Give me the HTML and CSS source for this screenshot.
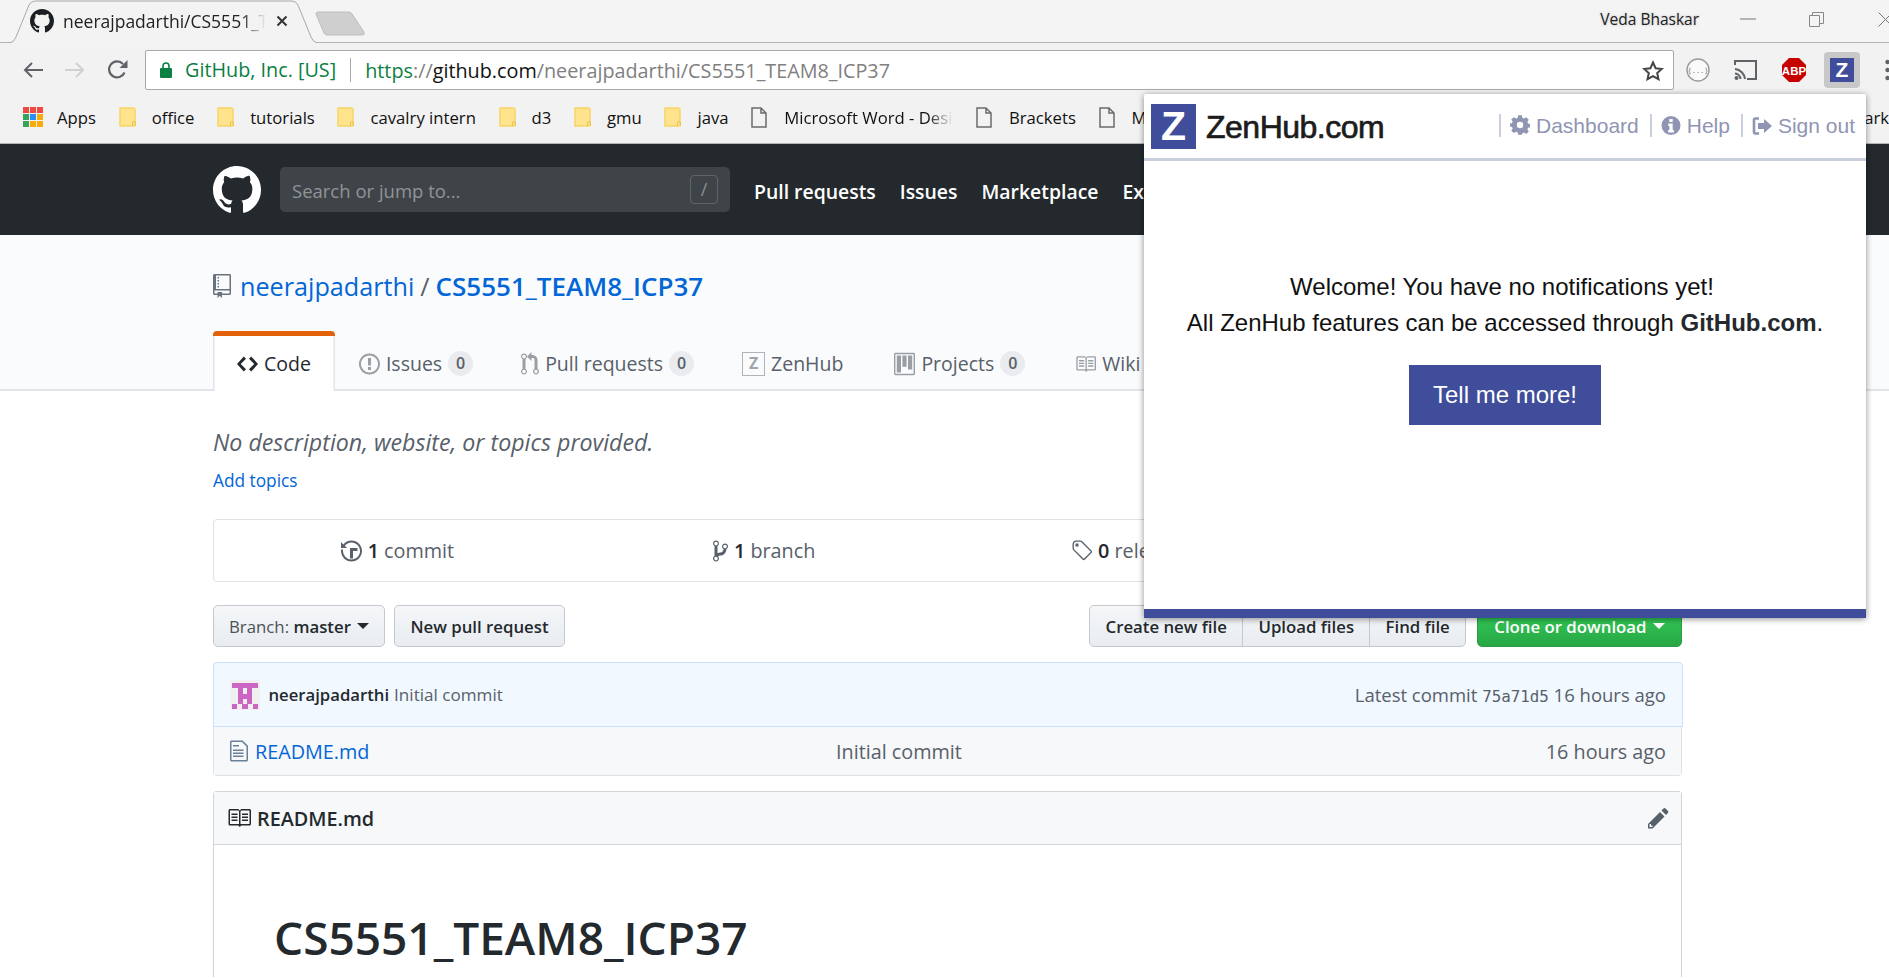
FILE: index.html
```html
<!DOCTYPE html>
<html lang="en">
<head>
    <meta charset="UTF-8">
    <title>neerajpadarthi/CS5551_TEAM8_ICP37</title>
    <link rel="stylesheet" href="styles.css">
</head>
<body>
    <div class="chrome">
        <div class="tabstrip">
            <div class="tab">
                <svg class="tab-shape" width="310" height="43" viewBox="0 0 310 43"><path d="M0 43 H2 Q6 42 8 37 L21 5 Q23 1 27 1 H284 Q288 1 290 5 L303 37 Q305 42 309 43" fill="#f3f3f3" stroke="#a9a9a9"/></svg>
                <svg class="favicon" width="24" height="24" viewBox="0 0 16 16"><path fill="#1b1f23" d="M8 0C3.58 0 0 3.58 0 8c0 3.54 2.29 6.53 5.47 7.59.4.07.55-.17.55-.38 0-.19-.01-.82-.01-1.49-2.01.37-2.53-.49-2.69-.94-.09-.23-.48-.94-.82-1.13-.28-.15-.68-.52-.01-.53.63-.01 1.08.58 1.23.82.72 1.21 1.87.87 2.33.66.07-.52.28-.87.51-1.07-1.78-.2-3.64-.89-3.64-3.95 0-.87.31-1.59.82-2.15-.08-.2-.36-1.02.08-2.12 0 0 .67-.21 2.2.82.64-.18 1.32-.27 2-.27.68 0 1.36.09 2 .27 1.53-1.04 2.2-.82 2.2-.82.44 1.1.16 1.92.08 2.12.51.56.82 1.27.82 2.15 0 3.07-1.87 3.75-3.65 3.95.29.25.54.73.54 1.48 0 1.07-.01 1.93-.01 2.2 0 .21.15.46.55.38A8.013 8.013 0 0016 8c0-4.42-3.58-8-8-8z"/></svg>
                <span class="tab-title">neerajpadarthi/CS5551_TEAM8_ICP37</span>
                <svg class="tab-close" width="12" height="12" viewBox="0 0 12 12"><path d="M1.5 1.5l9 9m0-9l-9 9" stroke="#333" stroke-width="2"/></svg>
            </div>
            <svg class="new-tab" width="51" height="25" viewBox="0 0 51 25"><path d="M1 3 Q1 1 3 1 H34 Q36 1 37 3 L49 21 Q50 24 47 24 H12 Q10 24 9 22 Z" fill="#cfcfcf" stroke="#bdbdbd"/></svg>
            <div class="window-controls">
                <span class="profile">Veda Bhaskar</span>
                <svg class="minimize" width="16" height="2" viewBox="0 0 16 2"><path d="M0 1h16" stroke="#777" stroke-width="1"/></svg>
                <svg class="restore" width="15" height="15" viewBox="0 0 15 15"><path d="M.5 3.5h10v11H.5zM3.5 3.5v-3h11v11h-4" fill="none" stroke="#888"/></svg>
                <svg class="close" width="15" height="15" viewBox="0 0 15 15"><path d="M.5 .5l14 14m0-14l-14 14" stroke="#777"/></svg>
            </div>
        </div>

        <div class="toolbar">
            <svg class="tool-back" width="20" height="16" viewBox="0 0 20 16"><path d="M9 1L2 8l7 7M2 8h18" fill="none" stroke="#5f6368" stroke-width="2"/></svg>
            <svg class="tool-forward" width="20" height="16" viewBox="0 0 20 16"><path d="M11 1l7 7-7 7M18 8H0" fill="none" stroke="#d0d0d0" stroke-width="2"/></svg>
            <svg class="tool-reload" width="21" height="21" viewBox="0 0 21 21"><path d="M17.5 13.5A8 8 0 1 1 16 5" fill="none" stroke="#5f6368" stroke-width="2.2"/><path d="M20.5 1v8h-8z" fill="#5f6368"/></svg>
            <div class="omnibox">
                <svg class="lock" width="12" height="16" viewBox="0 0 12 16"><path d="M3 6V4a3 3 0 0 1 6 0v2" fill="none" stroke="#0b8043" stroke-width="1.6"/><rect y="6" width="12" height="10" rx="1" fill="#0b8043"/></svg>
                <span class="ev-name">GitHub, Inc. [US]</span>
                <span class="url"><span class="url-scheme">https</span><span class="url-path">://</span><span class="url-host">github.com</span><span class="url-path">/neerajpadarthi/CS5551_TEAM8_ICP37</span></span>
                <svg class="star" width="22" height="21" viewBox="0 0 22 21"><path d="M11 2.5l2.6 5.7 6.2.7-4.6 4.2 1.3 6.1L11 16.1l-5.5 3.1 1.3-6.1-4.6-4.2 6.2-.7z" fill="none" stroke="#444" stroke-width="2"/></svg>
            </div>
            <div class="extensions">
                <svg class="ext" width="24" height="24" viewBox="0 0 24 24"><circle cx="12" cy="12" r="11" fill="#fafafa" stroke="#9b9b9b" stroke-width="1.4"/><text x="12" y="15" text-anchor="middle" class="ext-json">{...}</text></svg>
                <svg class="ext" width="24" height="24" viewBox="0 0 24 24"><path d="M1 7V3h21v18h-9" fill="none" stroke="#5f6368" stroke-width="2"/><path d="M1 11a11 11 0 0 1 10 10M1 15.500a6 6 0 0 1 5.500 5.500" fill="none" stroke="#5f6368" stroke-width="2"/><circle cx="2.500" cy="20" r="2" fill="#5f6368"/></svg>
                <svg class="ext ext-red" width="24" height="24" viewBox="0 0 24 24"><path d="M7 0h10l7 7v10l-7 7H7l-7-7V7z" fill="#c70000"/><text x="12" y="16.500" text-anchor="middle" class="ext-abp">ABP</text></svg>
                <div class="ext-active"><span class="ext-z">Z</span></div>
                <svg class="menu-dots" width="5" height="24" viewBox="0 0 5 24"><circle cx="2.500" cy="4" r="2.200" fill="#5f6368"/><circle cx="2.500" cy="12" r="2.200" fill="#5f6368"/><circle cx="2.500" cy="20" r="2.200" fill="#5f6368"/></svg>
            </div>
        </div>

        <div class="bookmarks">
            <div class="bm bm-apps">
                <div class="apps-grid">
                    <i class="c-red"></i><i class="c-red"></i><i class="c-red"></i>
                    <i class="c-green"></i><i class="c-blue"></i><i class="c-orange"></i>
                    <i class="c-green"></i><i class="c-orange"></i><i class="c-orange"></i>
                </div>
                Apps
            </div>
            <div class="bm"><svg class="folder" width="18" height="20" viewBox="0 0 18 20"><use href="#bm-folder"/></svg>office</div>
            <div class="bm"><svg class="folder" width="18" height="20" viewBox="0 0 18 20"><use href="#bm-folder"/></svg>tutorials</div>
            <div class="bm"><svg class="folder" width="18" height="20" viewBox="0 0 18 20"><use href="#bm-folder"/></svg>cavalry intern</div>
            <div class="bm"><svg class="folder" width="18" height="20" viewBox="0 0 18 20"><use href="#bm-folder"/></svg>d3</div>
            <div class="bm"><svg class="folder" width="18" height="20" viewBox="0 0 18 20"><use href="#bm-folder"/></svg>gmu</div>
            <div class="bm"><svg class="folder" width="18" height="20" viewBox="0 0 18 20"><use href="#bm-folder"/></svg>java</div>
            <div class="bm"><svg class="doc" width="16" height="21" viewBox="0 0 16 21"><use href="#bm-doc"/></svg><span class="bm-fade">Microsoft Word - Design</span></div>
            <div class="bm"><svg class="doc" width="16" height="21" viewBox="0 0 16 21"><use href="#bm-doc"/></svg>Brackets</div>
            <div class="bm"><svg class="doc" width="16" height="21" viewBox="0 0 16 21"><use href="#bm-doc"/></svg>MongoDB</div>
            <div class="bm bm-last">Spark</div>
        </div>
    </div>

    <svg class="defs" width="0" height="0">
        <symbol id="bm-folder" viewBox="0 0 18 20"><path d="M1 1h13q2 0 2 2v15q0 1-1 1H1z" fill="#ffe38d" stroke="#f6d665" stroke-width="1.500"/><path d="M13.500 19v-3q0-1.500 1.500-1.500t1.500 1.500v3" fill="none" stroke="#eac450"/></symbol>
        <symbol id="bm-doc" viewBox="0 0 16 21"><path d="M1 1h9l5 5v14H1z M10 1v5h5" fill="none" stroke="#6b6b6b" stroke-width="1.500"/></symbol>
    </svg>

    <div class="gh-header">
        <svg class="gh-logo" width="48" height="48" viewBox="0 0 16 16"><path fill="#fff" d="M8 0C3.58 0 0 3.58 0 8c0 3.54 2.29 6.53 5.47 7.59.4.07.55-.17.55-.38 0-.19-.01-.82-.01-1.49-2.01.37-2.53-.49-2.69-.94-.09-.23-.48-.94-.82-1.13-.28-.15-.68-.52-.01-.53.63-.01 1.08.58 1.23.82.72 1.21 1.87.87 2.33.66.07-.52.28-.87.51-1.07-1.78-.2-3.64-.89-3.64-3.95 0-.87.31-1.59.82-2.15-.08-.2-.36-1.02.08-2.12 0 0 .67-.21 2.2.82.64-.18 1.32-.27 2-.27.68 0 1.36.09 2 .27 1.53-1.04 2.2-.82 2.2-.82.44 1.1.16 1.92.08 2.12.51.56.82 1.27.82 2.15 0 3.07-1.87 3.75-3.65 3.95.29.25.54.73.54 1.48 0 1.07-.01 1.93-.01 2.2 0 .21.15.46.55.38A8.013 8.013 0 0016 8c0-4.42-3.58-8-8-8z"/></svg>
        <div class="gh-search">
            <span class="gh-placeholder">Search or jump to...</span>
            <span class="gh-slash">/</span>
        </div>
        <nav class="gh-nav">
            <a>Pull requests</a>
            <a>Issues</a>
            <a>Marketplace</a>
            <a>Explore</a>
        </nav>
    </div>

    <div class="repohead">
        <div class="repo-title">
            <svg class="repo-icon" width="18" height="24" viewBox="0 0 12 16"><path fill="#6a737d" d="M4 9H3V8h1v1zm0-3H3v1h1V6zm0-2H3v1h1V4zm0-2H3v1h1V2zm8-1v12c0 .55-.45 1-1 1H6v2l-1.500-1.500L3 16v-2H1c-.55 0-1-.45-1-1V1c0-.55.45-1 1-1h10c.55 0 1 .45 1 1zm-1 10H1v2h2v-1h3v1h5v-2zm0-10H2v9h9V1z"/></svg>
            <a class="repo-owner">neerajpadarthi</a>
            <span class="repo-sep">/</span>
            <a class="repo-name">CS5551_TEAM8_ICP37</a>
        </div>
        <div class="tabs">
            <a class="gh-tab selected"><svg width="21" height="24" viewBox="0 0 14 16"><path fill="#24292e" d="M9.500 3L8 4.500 11.500 8 8 11.500 9.500 13 14 8 9.500 3zm-5 0L0 8l4.500 5L6 11.500 2.500 8 6 4.500 4.500 3z"/></svg>Code</a>
            <a class="gh-tab"><svg width="21" height="24" viewBox="0 0 14 16"><path fill="#9a9fa5" d="M7 2.300c3.140 0 5.700 2.560 5.700 5.700s-2.560 5.700-5.700 5.700A5.710 5.710 0 0 1 1.300 8c0-3.140 2.560-5.700 5.700-5.700zM7 1C3.140 1 0 4.140 0 8s3.140 7 7 7 7-3.140 7-7-3.140-7-7-7zm1 3H6v5h2V4zm0 6H6v2h2v-2z"/></svg>Issues<span class="counter">0</span></a>
            <a class="gh-tab"><svg width="18" height="24" viewBox="0 0 12 16"><path fill="#9a9fa5" d="M11 11.280V5c-.03-.78-.34-1.470-.94-2.060C9.460 2.350 8.780 2.030 8 2H7V0L4 3l3 3V4h1c.27.02.48.11.69.31.21.2.3.42.31.69v6.280A1.993 1.993 0 0 0 10 15a1.993 1.993 0 0 0 1-3.720zm-1 2.920c-.66 0-1.200-.55-1.200-1.200 0-.65.55-1.200 1.200-1.200.65 0 1.200.55 1.200 1.200 0 .65-.55 1.200-1.200 1.200zM4 3c0-1.110-.89-2-2-2a1.993 1.993 0 0 0-1 3.720v6.560A1.993 1.993 0 0 0 2 15a1.993 1.993 0 0 0 1-3.720V4.720c.59-.34 1-.98 1-1.720zm-.8 10c0 .66-.55 1.200-1.200 1.200-.65 0-1.200-.55-1.200-1.200 0-.65.55-1.200 1.200-1.200.65 0 1.200.55 1.200 1.200zM2 4.200C1.340 4.200.8 3.650.8 3c0-.65.55-1.200 1.200-1.200.65 0 1.200.55 1.200 1.200 0 .65-.55 1.200-1.200 1.200z"/></svg>Pull requests<span class="counter">0</span></a>
            <a class="gh-tab gh-tab-zen"><span class="zh-icon">Z</span>ZenHub</a>
            <a class="gh-tab gh-tab-proj"><svg width="21" height="24" viewBox="0 0 15 16"><path fill="#9a9fa5" fill-rule="evenodd" d="M10 12h3V2h-3v10zm-4-2h3V2H6v8zm-4 4h3V2H2v12zm-1 1h13V1H1v14zM14 0H1a1 1 0 0 0-1 1v14a1 1 0 0 0 1 1h13a1 1 0 0 0 1-1V1a1 1 0 0 0-1-1z"/></svg>Projects<span class="counter">0</span></a>
            <a class="gh-tab"><svg width="21" height="24" viewBox="0 0 16 16"><path fill="#9a9fa5" d="M3 5h4v1H3V5zm0 3h4V7H3v1zm0 2h4V9H3v1zm11-5h-4v1h4V5zm0 2h-4v1h4V7zm0 2h-4v1h4V9zm2-6v9c0 .55-.45 1-1 1H9.500l-1 1-1-1H2c-.55 0-1-.45-1-1V3c0-.55.45-1 1-1h5.500l1 1 1-1H15c.55 0 1 .45 1 1zm-8 .5L7.500 3H2v9h6V3.500zm7-.5H9.500l-.5.5V12h6V3z"/></svg>Wiki</a>
        </div>
    </div>

    <div class="container">
        <div class="repo-desc">No description, website, or topics provided.</div>
        <a class="add-topics">Add topics</a>

        <div class="numbers">
            <div class="num"><svg width="21" height="24" viewBox="0 0 14 16"><path fill="#586069" d="M8 13H6V6h5v2H8v5zM7 1C4.810 1 2.870 2.020 1.590 3.590L0 2v4h4L2.500 4.500C3.550 3.170 5.170 2.300 7 2.300c3.140 0 5.700 2.560 5.700 5.700s-2.560 5.700-5.700 5.700A5.710 5.710 0 0 1 1.300 8c0-.34.03-.67.09-1H.08C.03 7.330 0 7.660 0 8c0 3.860 3.140 7 7 7s7-3.140 7-7-3.140-7-7-7z"/></svg><span><b>1</b> commit</span></div>
            <div class="num"><svg width="15" height="24" viewBox="0 0 10 16"><path fill="#586069" d="M10 5c0-1.110-.89-2-2-2a1.993 1.993 0 0 0-1 3.720v.3c-.02.52-.23.98-.63 1.380-.4.4-.86.61-1.380.63-.83.02-1.480.16-2 .45V4.720a1.993 1.993 0 0 0-1-3.720C.88 1 0 1.890 0 3a2 2 0 0 0 1 1.720v6.560c-.59.35-1 .99-1 1.720 0 1.110.89 2 2 2 1.110 0 2-.89 2-2 0-.53-.2-1-.53-1.360.09-.06.48-.41.59-.47.25-.11.56-.17.94-.17 1.050-.05 1.950-.45 2.750-1.250S8.950 7.770 9 6.730h-.02C9.590 6.370 10 5.730 10 5zM2 1.800c.66 0 1.200.55 1.200 1.200 0 .65-.55 1.200-1.200 1.200C1.350 4.200.8 3.650.8 3c0-.65.55-1.200 1.200-1.200zm0 12.410c-.66 0-1.200-.55-1.200-1.200 0-.65.55-1.200 1.200-1.200.65 0 1.200.55 1.200 1.200 0 .65-.55 1.200-1.200 1.200zm6-8c-.66 0-1.200-.55-1.200-1.200 0-.65.55-1.200 1.200-1.200.65 0 1.200.55 1.200 1.200 0 .65-.55 1.200-1.200 1.200z"/></svg><span><b>1</b> branch</span></div>
            <div class="num"><svg width="21" height="24" viewBox="0 0 14 16"><path fill="#586069" d="M7.730 1.730C7.260 1.260 6.620 1 5.960 1H3.500C2.130 1 1 2.130 1 3.500v2.470c0 .66.27 1.300.73 1.770l6.060 6.060c.39.39 1.020.39 1.410 0l4.590-4.590a.996.996 0 0 0 0-1.410L7.730 1.730zM2.380 7.090c-.31-.3-.47-.7-.47-1.130V3.500c0-.88.72-1.590 1.590-1.590h2.470c.42 0 .83.16 1.130.47l6.140 6.130-4.730 4.730-6.130-6.150zM3.010 3h2v2H3V3h.01z"/></svg><span><b>0</b> releases</span></div>
            <div class="num"><span><b>1</b> contributor</span></div>
        </div>

        <div class="file-nav">
            <a class="btn btn-branch">Branch: <span class="btn-strong">master</span><i class="caret"></i></a>
            <a class="btn btn-new">New pull request</a>
            <div class="btn-group">
                <a class="btn">Create new file</a>
                <a class="btn">Upload files</a>
                <a class="btn">Find file</a>
            </div>
            <a class="btn btn-clone">Clone or download<i class="caret"></i></a>
        </div>

        <div class="files">
            <div class="commit-bar">
                <svg class="avatar" width="30" height="30" viewBox="0 0 30 30" shape-rendering="crispEdges"><rect width="30" height="30" fill="#f0f0f0"/><path fill="#cc66c4" d="M2 3h26v5H2zM8 8h5v6H8zM17 8h5v6h-5zM8 14h14v5H8zM8 19h5v5H8zM17 19h5v5h-5zM2 24h5v5H2zM12 24h6v5h-6zM23 24h5v5h-5z"/></svg>
                <a class="commit-author">neerajpadarthi</a>
                <span class="commit-msg">Initial commit</span>
                <span class="commit-latest">Latest commit <code class="sha">75a71d5</code> 16 hours ago</span>
            </div>
            <div class="file-row">
                <svg width="18" height="24" viewBox="0 0 12 16"><path fill="#6a8099" d="M6 5H2V4h4v1zM2 8h7V7H2v1zm0 2h7V9H2v1zm0 2h7v-1H2v1zm10-7.500V14c0 .55-.45 1-1 1H1c-.55 0-1-.45-1-1V2c0-.55.45-1 1-1h7.500L12 4.500zM11 5L8 2H1v12h10V5z"/></svg>
                <a class="file-name">README.md</a>
                <span class="file-msg">Initial commit</span>
                <span class="file-age">16 hours ago</span>
            </div>
        </div>

        <div class="readme">
            <div class="readme-head">
                <svg width="24" height="24" viewBox="0 0 16 16"><path fill="#24292e" d="M3 5h4v1H3V5zm0 3h4V7H3v1zm0 2h4V9H3v1zm11-5h-4v1h4V5zm0 2h-4v1h4V7zm0 2h-4v1h4V9zm2-6v9c0 .55-.45 1-1 1H9.500l-1 1-1-1H2c-.55 0-1-.45-1-1V3c0-.55.45-1 1-1h5.500l1 1 1-1H15c.55 0 1 .45 1 1zm-8 .5L7.500 3H2v9h6V3.500zm7-.5H9.500l-.5.5V12h6V3z"/></svg>
                <span class="readme-file">README.md</span>
                <svg class="pencil" width="21" height="24" viewBox="0 0 14 16"><path fill="#586069" d="M0 12v3h3l8-8-3-3-8 8zm3 2H1v-2h1v1h1v1zm10.300-9.300L12 6 9 3l1.300-1.300a.996.996 0 0 1 1.410 0l1.590 1.590c.39.39.39 1.020 0 1.410z"/></svg>
            </div>
            <div class="readme-body">
                <h1>CS5551_TEAM8_ICP37</h1>
            </div>
        </div>
    </div>

    <div class="zen-popup">
        <div class="zen-head">
            <span class="zen-logo">Z</span>
            <span class="zen-brand">ZenHub.com</span>
            <div class="zen-links">
                <a class="zen-link">
                    <svg width="20" height="21" viewBox="0 0 20 20"><path fill="#8f95b3" fill-rule="evenodd" d="M8 0h4l.6 2.800 1.700.7L16.700 2l2.800 2.800-1.500 2.400.7 1.700 2.300.5v3.600l-2.300.6-.7 1.700 1.500 2.400-2.800 2.600-2.400-1.500-1.700.7L12 21H8l-.6-2.500-1.700-.7L3.300 19.300.5 16.700 2 14.300l-.7-1.700L-1 12V9l2.300-.5.7-1.700L.5 4.400 3.300 2l2.400 1.500 1.700-.7zM10 7a3.400 3.400 0 1 0 0 7 3.400 3.400 0 0 0 0-7z" transform="scale(.92) translate(.9 -.2)"/></svg>
                    Dashboard
                </a>
                <a class="zen-link">
                    <svg width="20" height="21" viewBox="0 0 20 20"><path fill="#8f95b3" fill-rule="evenodd" d="M10 .5a9.500 9.500 0 1 0 0 19 9.500 9.500 0 0 0 0-19zM8.300 3.500h3.400v3H8.300zM7.300 8h4.400v6.500h1.200V17H7.200v-2.500h1.200v-4H7.300z"/></svg>
                    Help
                </a>
                <a class="zen-link">
                    <svg width="20" height="20" viewBox="0 0 20 20"><path d="M7 2.500H3.500Q2 2.500 2 4v12q0 1.500 1.500 1.500H7" fill="none" stroke="#8f95b3" stroke-width="2.600"/><path fill="#8f95b3" d="M12 3l8 7-8 7v-4H6V7h6z"/></svg>
                    Sign out
                </a>
            </div>
        </div>
        <div class="zen-body">
            <p class="zen-text zen-welcome">Welcome! You have no notifications yet!</p>
            <p class="zen-text">All ZenHub features can be accessed through <strong>GitHub.com</strong>.</p>
            <a class="zen-button">Tell me more!</a>
        </div>
        <div class="zen-foot"></div>
    </div>
</body>
</html>
```

FILE: styles.css
```css
html, body {
    padding:0px;
    margin:0px;
    background: white;
    height:978px;
    overflow:hidden;
    font-family:"Open Sans", sans-serif;
}

a {
    cursor:pointer;
}

.defs {
    position:absolute;
}

/* browser chrome */

.tabstrip {
    height:43px;
    box-sizing:border-box;
    border-bottom:1px solid #b4b4b4;
    background:#f4f4f4;
    display:flex;
}

.tab {
    position:relative;
    width:310px;
    height:43px;
    margin-left:8px;
    display:flex;
    align-items:center;
    flex:none;
    padding-bottom:2px;
    box-sizing:border-box;
}

.tab-shape {
    position:absolute;
    left:0px;
    top:0px;
}

.favicon {
    position:relative;
    margin-left:22px;
    flex:none;
}

.tab-title {
    position:relative;
    width:203px;
    margin-left:9px;
    font-size:17.5px;
    color:#222;
    white-space:nowrap;
    overflow:hidden;
    -webkit-mask-image:linear-gradient(to right, black 88%, transparent);
    mask-image:linear-gradient(to right, black 88%, transparent);
}

.tab-close {
    position:relative;
    margin-left:10px;
    flex:none;
}

.new-tab {
    margin-left:-3px;
    margin-top:11px;
    flex:none;
}

.window-controls {
    margin-left:auto;
    display:flex;
    align-items:center;
    height:38px;
    margin-right:-4px;
}

.profile {
    font-size:15.5px;
    color:#222;
    text-shadow:0 0 3px white, 0 0 3px white, 0 0 2px #666;
    margin-right:41px;
}

.minimize {
    margin-right:53px;
}

.restore {
    margin-right:54px;
}

.toolbar {
    height:48px;
    background:#f2f2f2;
    display:flex;
    align-items:flex-start;
    box-sizing:border-box;
    padding-top:7px;
}

.tool-back {
    margin-left:23px;
    margin-top:12px;
    flex:none;
}

.tool-forward {
    margin-left:22px;
    margin-top:12px;
    flex:none;
}

.tool-reload {
    margin-left:22px;
    margin-top:9px;
    flex:none;
}

.omnibox {
    width:1529px;
    height:40px;
    margin-left:17px;
    box-sizing:border-box;
    background:white;
    border:1px solid #a9a9a9;
    border-radius:2px;
    display:flex;
    align-items:center;
    flex:none;
    font-size:19.8px;
    white-space:nowrap;
}

.lock {
    margin-left:14px;
    flex:none;
}

.ev-name {
    margin-left:13px;
    padding-right:14px;
    color:#0b8043;
    border-right:1px solid #a9a9a9;
    line-height:24px;
}

.url {
    margin-left:14px;
}

.url-scheme {
    color:#0b8043;
}

.url-host {
    color:#111;
}

.url-path {
    color:#808080;
}

.star {
    margin-left:auto;
    margin-right:9px;
}

.extensions {
    margin-left:12px;
    display:flex;
    align-items:center;
    height:36px;
    margin-top:2px;
    flex:none;
}

.ext {
    margin-right:24px;
    flex:none;
}

.ext-red {
    margin-right:18px;
}

.ext-json {
    font-family:"DejaVu Sans Mono", monospace;
    font-size:7px;
    fill:#777;
}

.ext-abp {
    font-family:"Liberation Sans", sans-serif;
    font-weight:bold;
    font-size:11.5px;
    fill:white;
}

.ext-active {
    width:36px;
    height:36px;
    margin-right:25px;
    background:#c8c8c8;
    border-radius:4px;
    display:flex;
    align-items:center;
    justify-content:center;
    flex:none;
}

.ext-z {
    width:24px;
    height:24px;
    background:#3f4d9b;
    color:white;
    font-family:"Liberation Sans", sans-serif;
    font-weight:bold;
    font-size:21px;
    line-height:24px;
    text-align:center;
}

.menu-dots {
    flex:none;
}

.bookmarks {
    height:53px;
    box-sizing:border-box;
    background:#f2f2f2;
    border-bottom:1px solid #b4b4b4;
    display:flex;
    align-items:center;
    font-size:16.7px;
    color:#111;
    white-space:nowrap;
    padding-left:23px;
    overflow:hidden;
}

.bm {
    display:flex;
    align-items:center;
    margin-right:22.7px;
    flex:none;
}

.bm-fade {
    width:169px;
    overflow:hidden;
    -webkit-mask-image:linear-gradient(to right, black 85%, transparent);
    mask-image:linear-gradient(to right, black 85%, transparent);
}

.bm-last {
    margin-left:auto;
    margin-right:0px;
}

.apps-grid {
    display:grid;
    grid-template-columns:repeat(3, 6px);
    grid-auto-rows:6px;
    gap:1px;
    margin-right:14px;
}

.c-red {
    background:#ef4a41;
}

.c-green {
    background:#36a55a;
}

.c-blue {
    background:#2b8df5;
}

.c-orange {
    background:#fbac0d;
}

.folder {
    margin-right:15px;
    flex:none;
}

.doc {
    margin-right:17px;
    flex:none;
}

/* github header */

.gh-header {
    height:91px;
    background:#24292e;
    display:flex;
    align-items:center;
    padding-left:213px;
}

.gh-logo {
    flex:none;
}

.gh-search {
    width:450px;
    height:45px;
    margin-left:19px;
    background:#3f4448;
    border-radius:5px;
    display:flex;
    align-items:center;
    justify-content:space-between;
    box-sizing:border-box;
    padding:0px 12px;
    flex:none;
}

.gh-placeholder {
    margin-top:1px;
    font-size:18.5px;
    color:#8f9498;
}

.gh-slash {
    width:28px;
    height:29px;
    box-sizing:border-box;
    border:1.500px solid #5f6569;
    border-radius:4px;
    color:#8a9094;
    font-size:18px;
    line-height:26px;
    text-align:center;
}

.gh-nav {
    display:flex;
    gap:24px;
    margin-left:24px;
    margin-top:3px;
    white-space:nowrap;
}

.gh-nav a {
    color:white;
    font-size:19.4px;
    font-weight:600;
}

/* repo head */

.repohead {
    background:#fafbfc;
    padding-top:30px;
    padding-left:213px;
}

.repo-title {
    height:42px;
    margin-bottom:24px;
    display:flex;
    align-items:center;
    font-size:25.2px;
    white-space:nowrap;
    color:#586069;
}

.repo-icon {
    margin-right:9px;
    flex:none;
}

.repo-owner {
    color:#0366d6;
}

.repo-sep {
    margin:0px 6px;
}

.repo-name {
    color:#0366d6;
    font-size:26px;
    font-weight:600;
}

.tabs {
    display:flex;
    height:60px;
    margin-left:-213px;
    padding-left:213px;
    box-sizing:border-box;
    border-bottom:2px solid #e1e4e8;
}

.gh-tab {
    height:60px;
    box-sizing:border-box;
    padding:0px 24px;
    border-top:5px solid transparent;
    display:flex;
    align-items:center;
    gap:6px;
    font-size:19.500px;
    color:#586069;
    white-space:nowrap;
    flex:none;
}

.gh-tab-zen {
    padding-right:27px;
}

.gh-tab-proj {
    padding-right:26px;
}

.gh-tab.selected {
    background:white;
    color:#24292e;
    border-top-color:#e36209;
    border-radius:4px 4px 0px 0px;
    box-shadow:inset 1.500px 0 0 #e1e4e8, inset -1.500px 0 0 #e1e4e8;
}

.counter {
    width:25px;
    height:25px;
    border-radius:50%;
    background:#e9ebee;
    color:#586069;
    font-size:16px;
    font-weight:600;
    line-height:25px;
    text-align:center;
}

.zh-icon {
    width:23px;
    height:24px;
    box-sizing:border-box;
    border:1.500px solid #b0b4b9;
    color:#a0a4aa;
    font-size:16px;
    font-weight:bold;
    line-height:21px;
    text-align:center;
}

/* repo content */

.container {
    width:1469px;
    margin-left:213px;
    padding-top:33px;
    font-size:19.8px;
    color:#586069;
}

.repo-desc {
    height:36px;
    font-size:23.2px;
    line-height:36px;
    font-style:italic;
}

.add-topics {
    display:block;
    height:24px;
    margin-top:9px;
    font-size:17.3px;
    line-height:24px;
    color:#0366d6;
}

.numbers {
    height:63px;
    margin-top:26px;
    box-sizing:border-box;
    border:1.500px solid #dfe2e5;
    border-radius:4px;
    display:grid;
    grid-template-columns:repeat(4, 1fr);
}

.num {
    display:flex;
    align-items:center;
    justify-content:center;
    gap:6px;
    white-space:pre;
}

.num b {
    color:#24292e;
    font-weight:600;
}

.file-nav {
    height:42px;
    margin-top:23px;
    display:flex;
}

.btn {
    height:42px;
    box-sizing:border-box;
    padding:0px 15px;
    display:flex;
    align-items:center;
    white-space:pre;
    font-size:16.800px;
    font-weight:600;
    color:#24292e;
    background:linear-gradient(#f5f7f9, #e8ecf0);
    border:1.500px solid #c5c8cc;
    border-radius:5px;
}

.btn-branch {
    font-weight:400;
    color:#4a5157;
}

.btn-strong {
    color:#24292e;
    font-weight:600;
}

.btn-branch .caret {
    color:#24292e;
}

.btn-new {
    margin-left:9.5px;
}

.btn-group {
    margin-left:auto;
    display:flex;
}

.btn-group .btn {
    border-radius:0px;
    margin-left:-1.500px;
    padding:0px 15.5px;
}

.btn-group .btn:first-child {
    border-radius:5px 0px 0px 5px;
}

.btn-group .btn:last-child {
    border-radius:0px 5px 5px 0px;
}

.btn-clone {
    margin-left:10.5px;
    padding:0px 16.5px;
    color:white;
    background:linear-gradient(#34d058, #28a745);
    border-color:#2a9b46;
}

.caret {
    margin-left:6px;
    border-top:6px solid currentColor;
    border-left:6px solid transparent;
    border-right:6px solid transparent;
}

.files {
    margin-top:15px;
    border:1.500px solid #dfe2e5;
    border-radius:4px;
    border-top:none;
}

.commit-bar {
    height:65px;
    margin:0px -1.500px;
    box-sizing:border-box;
    background:#f1f8ff;
    border:1.500px solid #c8e1ff;
    border-radius:4px 4px 0px 0px;
    display:flex;
    align-items:center;
    padding:0px 15.5px 0px 16px;
    white-space:nowrap;
    font-size:17.1px;
}

.avatar {
    margin-right:9px;
    flex:none;
}

.commit-author {
    color:#24292e;
    font-weight:600;
    font-size:16.7px;
}

.commit-msg {
    margin-left:5px;
    color:#586069;
}

.commit-latest {
    margin-left:auto;
    color:#586069;
    font-size:18.5px;
}

.sha {
    font-family:"DejaVu Sans Mono", monospace;
    font-size:15.8px;
}

.file-row {
    height:48px;
    box-sizing:border-box;
    background:#f6f8fa;
    display:flex;
    align-items:center;
    padding:0px 15px 0px 16px;
    white-space:nowrap;
    position:relative;
}

.file-name {
    margin-left:7px;
    color:#0366d6;
    width:581px;
}

.file-age {
    margin-left:auto;
}

.readme {
    margin-top:15px;
    border:1.500px solid #d1d5da;
    border-bottom:none;
    border-radius:4px 4px 0px 0px;
}

.readme-head {
    height:53px;
    box-sizing:border-box;
    background:#f6f8fa;
    border-bottom:1.500px solid #d1d5da;
    display:flex;
    align-items:center;
    padding:0px 12px 0px 13px;
    color:#24292e;
    font-weight:600;
}

.readme-file {
    margin-left:6px;
}

.pencil {
    margin-left:auto;
}

.readme-body {
    padding:62px 60px 10px 60px;
    background:white;
}

h1 {
    margin:0px;
    font-size:46px;
    line-height:60px;
    font-weight:600;
    color:#24292e;
    white-space:nowrap;
}

/* zenhub popup, sits over the page */

.zen-popup {
    position:absolute;
    left:1144px;
    top:94px;
    width:722px;
    height:524px;
    background:white;
    border-radius:2px;
    box-shadow:0 1px 6px rgba(0,0,0,0.45);
    display:flex;
    flex-direction:column;
    font-family:"Liberation Sans", Arial, sans-serif;
}

.zen-head {
    height:67px;
    box-sizing:border-box;
    border-bottom:3px solid #c9cfde;
    display:flex;
    align-items:flex-start;
    padding:10px 11px 0px 7px;
    flex:none;
}

.zen-logo {
    width:45px;
    height:45px;
    background:#3f4d9b;
    color:white;
    font-size:41px;
    font-weight:bold;
    line-height:45px;
    text-align:center;
    flex:none;
}

.zen-brand {
    margin-left:10px;
    margin-top:1px;
    font-size:32px;
    line-height:44px;
    letter-spacing:-0.5px;
    color:#1c1c1c;
    -webkit-text-stroke:0.7px #1c1c1c;
}

.zen-links {
    margin-left:auto;
    margin-top:10px;
    display:flex;
    white-space:nowrap;
}

.zen-link {
    height:23px;
    box-sizing:border-box;
    border-left:2px solid #c9cfde;
    padding-left:9px;
    margin-left:11px;
    display:flex;
    align-items:center;
    gap:6px;
    font-size:21px;
    color:#8f95b3;
}

.zen-body {
    flex:1;
    padding-top:108px;
    display:flex;
    flex-direction:column;
    align-items:center;
}

.zen-text {
    margin:0px;
    font-size:24px;
    line-height:36px;
    color:#111;
    white-space:nowrap;
}

.zen-welcome {
    padding-right:6px;
}

.zen-text strong {
    color:#24292e;
}

.zen-button {
    width:192px;
    height:60px;
    margin-top:24px;
    background:#404d9b;
    color:white;
    font-size:24px;
    line-height:60px;
    text-align:center;
}

.zen-foot {
    height:9px;
    background:#404d9b;
    flex:none;
}
```
